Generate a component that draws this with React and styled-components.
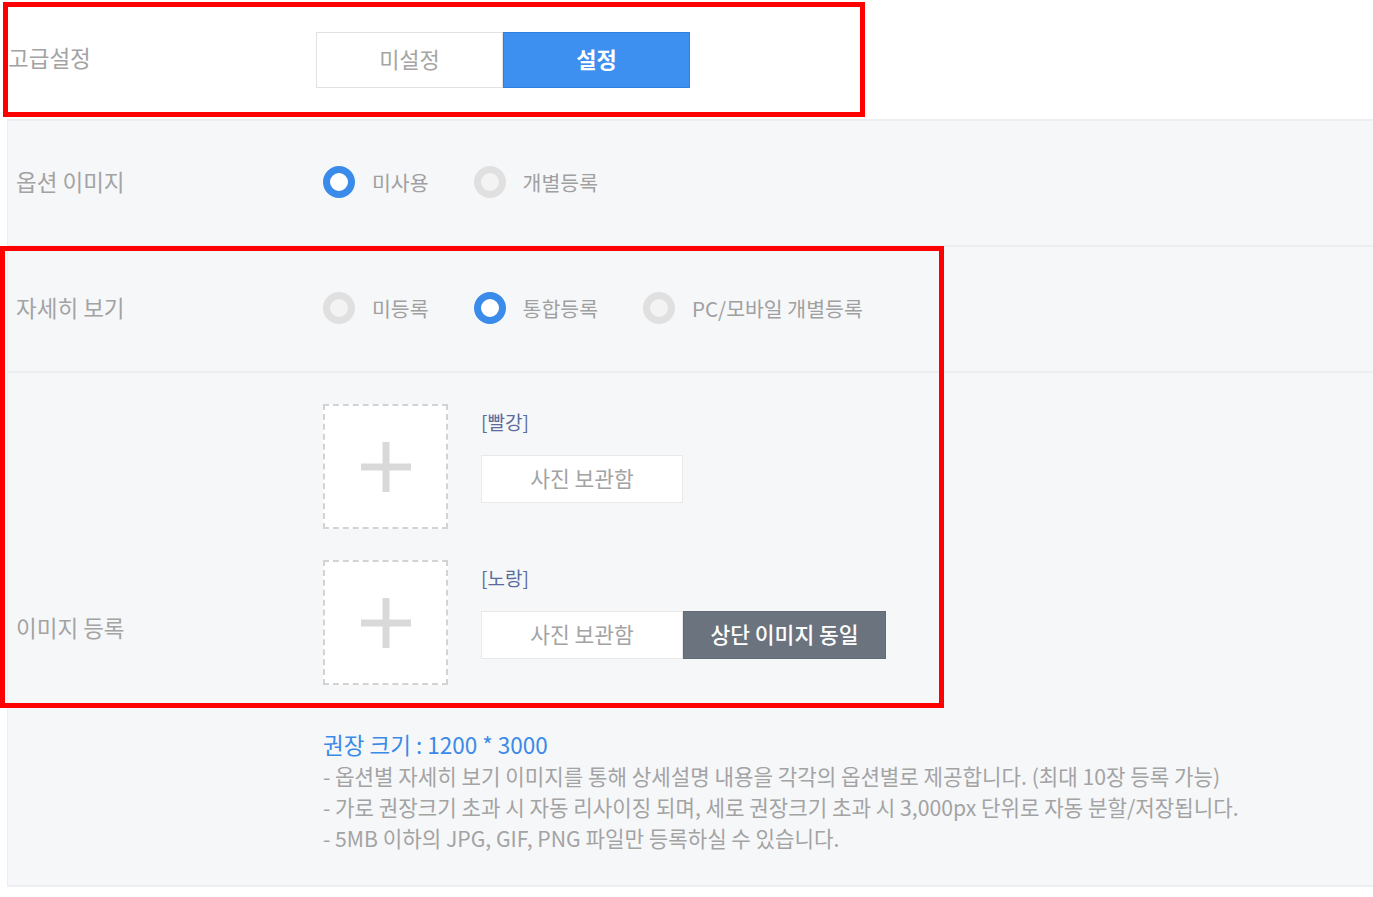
import React, { useState } from "react";
import styled, { createGlobalStyle, css } from "styled-components";

const GlobalStyle = createGlobalStyle`
  html, body {
    margin: 0;
    padding: 0;
    background: #ffffff;
  }
  body {
    font-family: "Noto Sans CJK KR", "Noto Sans", sans-serif;
    color: #9a9a9a;
  }
`;

const Page = styled.div`
  position: relative;
  width: 1373px;
  height: 897px;
  overflow: hidden;
`;

const TopRow = styled.div`
  display: flex;
  align-items: center;
  height: 119px;
  padding-left: 8px;
`;

const TopLabel = styled.div`
  width: 308px;
  font-size: 22.5px;
  line-height: 1;
  margin-top: -4px;
  color: #a3a3a3;
`;

const Segmented = styled.div`
  display: flex;
`;

const SegButton = styled.button`
  width: 187px;
  height: 56px;
  margin: 0;
  padding: 0 0 3px;
  font-family: inherit;
  font-size: 22px;
  cursor: pointer;
  border: 1px solid #e2e2e2;
  background: #ffffff;
  color: #a5a5a5;
  ${(p) =>
    p.$active &&
    css`
      background: #3d8ff0;
      border-color: #2f7fde;
      color: #ffffff;
      font-weight: 700;
    `}
`;

const Panel = styled.div`
  margin-left: 7px;
  background: #f6f7f9;
  border-top: 2px solid #eceef1;
  border-left: 1px solid #eceef1;
`;

const Row = styled.div`
  display: flex;
  align-items: center;
  min-height: 124px;
  border-bottom: 2px solid #eceef1;
  padding-left: 8px;
`;

const Label = styled.div`
  width: 307px;
  flex-shrink: 0;
  font-size: 22.5px;
  line-height: 1;
  margin-top: -4px;
  color: #a3a3a3;
`;

const Content = styled.div`
  flex: 1;
  display: flex;
  flex-direction: column;
  padding: ${(p) => (p.$padded ? "31px 0 32px" : "0")};
`;

const RadioGroup = styled.div`
  display: flex;
  align-items: center;
  gap: 45px;
  margin-top: -2px;
`;

const RadioItem = styled.label`
  display: flex;
  align-items: center;
  gap: 17px;
  font-size: 20.5px;
  color: #a0a0a0;
  cursor: pointer;
`;

const RadioDot = styled.span`
  width: 32px;
  height: 32px;
  border-radius: 50%;
  box-sizing: border-box;
  border: 7px solid ${(p) => (p.$checked ? "#3a8bea" : "#e0e0e0")};
  background: ${(p) => (p.$checked ? "#ffffff" : "#f3f3f3")};
`;

const ImageEntry = styled.div`
  display: flex;
  gap: 33px;
  & + & {
    margin-top: 31px;
  }
`;

const ImageBox = styled.div`
  width: 125px;
  height: 125px;
  box-sizing: border-box;
  border: 2px dashed #d3d3d3;
  background: #ffffff;
  display: flex;
  align-items: center;
  justify-content: center;
`;

const PlusIcon = styled.svg`
  width: 50px;
  height: 50px;
`;

const EntryInfo = styled.div`
  display: flex;
  flex-direction: column;
  padding-top: 6px;
`;

const ColorName = styled.div`
  font-size: 19px;
  line-height: 24px;
  color: #5b6b9b;
  margin-bottom: 21px;
`;

const ButtonRow = styled.div`
  display: flex;
`;

const PhotoButton = styled.button`
  height: 48px;
  width: ${(p) => p.$width || 202}px;
  margin: 0;
  padding: 0 0 3px;
  font-family: inherit;
  font-size: 21.5px;
  cursor: pointer;
  border: 1px solid #e9e9e9;
  background: #ffffff;
  color: #a3a3a3;
  ${(p) =>
    p.$dark &&
    css`
      background: #6b737e;
      border-color: #626a75;
      color: #ffffff;
      font-weight: 500;
    `}
`;

const Notes = styled.div`
  margin-top: 44px;
  line-height: 31px;
`;

const NoteTitle = styled.div`
  font-size: 22.5px;
  color: #3b8ae8;
`;

const NoteLine = styled.div`
  font-size: 21.2px;
  color: #a3a3a3;
`;

const Highlight = styled.div`
  position: absolute;
  box-sizing: border-box;
  border: 5px solid #ff0000;
  pointer-events: none;
  left: ${(p) => p.$x}px;
  top: ${(p) => p.$y}px;
  width: ${(p) => p.$w}px;
  height: ${(p) => p.$h}px;
`;

const Plus = () => (
  <PlusIcon viewBox="0 0 50 50">
    <rect x="0" y="21.5" width="50" height="7" fill="#d9d9d9" />
    <rect x="21.5" y="0" width="7" height="50" fill="#d9d9d9" />
  </PlusIcon>
);

const Radios = ({ options, value, onChange }) => (
  <RadioGroup>
    {options.map((opt) => (
      <RadioItem key={opt} onClick={() => onChange(opt)}>
        <RadioDot $checked={value === opt} />
        {opt}
      </RadioItem>
    ))}
  </RadioGroup>
);

const entries = [
  { name: "[빨강]", sameAsTop: false },
  { name: "[노랑]", sameAsTop: true },
];

const App = () => {
  const [advanced, setAdvanced] = useState("설정");
  const [optionImage, setOptionImage] = useState("미사용");
  const [detail, setDetail] = useState("통합등록");

  return (
    <Page>
      <GlobalStyle />
      <TopRow>
        <TopLabel>고급설정</TopLabel>
        <Segmented>
          {["미설정", "설정"].map((v) => (
            <SegButton key={v} $active={advanced === v} onClick={() => setAdvanced(v)}>
              {v}
            </SegButton>
          ))}
        </Segmented>
      </TopRow>

      <Panel>
        <Row>
          <Label>옵션 이미지</Label>
          <Content>
            <Radios options={["미사용", "개별등록"]} value={optionImage} onChange={setOptionImage} />
          </Content>
        </Row>
        <Row>
          <Label>자세히 보기</Label>
          <Content>
            <Radios
              options={["미등록", "통합등록", "PC/모바일 개별등록"]}
              value={detail}
              onChange={setDetail}
            />
          </Content>
        </Row>
        <Row>
          <Label>이미지 등록</Label>
          <Content $padded>
            {entries.map((e) => (
              <ImageEntry key={e.name}>
                <ImageBox>
                  <Plus />
                </ImageBox>
                <EntryInfo>
                  <ColorName>{e.name}</ColorName>
                  <ButtonRow>
                    <PhotoButton>사진 보관함</PhotoButton>
                    {e.sameAsTop && (
                      <PhotoButton $dark $width={203}>
                        상단 이미지 동일
                      </PhotoButton>
                    )}
                  </ButtonRow>
                </EntryInfo>
              </ImageEntry>
            ))}
            <Notes>
              <NoteTitle>권장 크기 : 1200 * 3000</NoteTitle>
              <NoteLine>- 옵션별 자세히 보기 이미지를 통해 상세설명 내용을 각각의 옵션별로 제공합니다. (최대 10장 등록 가능)</NoteLine>
              <NoteLine>- 가로 권장크기 초과 시 자동 리사이징 되며, 세로 권장크기 초과 시 3,000px 단위로 자동 분할/저장됩니다.</NoteLine>
              <NoteLine>- 5MB 이하의 JPG, GIF, PNG 파일만 등록하실 수 있습니다.</NoteLine>
            </Notes>
          </Content>
        </Row>
      </Panel>

      <Highlight $x={3} $y={2} $w={862} $h={115} />
      <Highlight $x={0} $y={246} $w={944} $h={462} />
    </Page>
  );
};

export default App;
